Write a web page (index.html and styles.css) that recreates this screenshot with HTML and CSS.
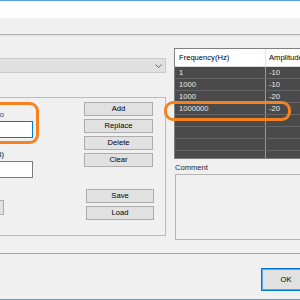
FILE: index.html
```
<!DOCTYPE html>
<html>
<head>
<meta charset="utf-8">
<link rel="stylesheet" href="styles.css">
</head>
<body>
<div class="window">
  <div class="titlebar"></div>
  <div class="toolbar"></div>
  <div class="main">
    <div class="left">
      <div class="combo">
        <svg class="chev" width="7" height="4" viewBox="0 0 7 4"><path d="M0.5 0.5 L3.5 3.5 L6.5 0.5" fill="none" stroke="#606060" stroke-width="1"/></svg>
      </div>
      <div class="group">
        <div class="form">
          <div class="label label-first">Frequency Info</div>
          <div class="input focus"></div>
          <div class="label label-second">Amplitude(dB)</div>
          <div class="input"></div>
          <div class="btn side-btn"></div>
        </div>
        <div class="buttons">
          <div class="btn">Add</div>
          <div class="btn">Replace</div>
          <div class="btn">Delete</div>
          <div class="btn">Clear</div>
          <div class="btn file-btn save">Save</div>
          <div class="btn file-btn">Load</div>
        </div>
      </div>
    </div>
    <div class="right">
      <div class="table">
        <div class="row head"><div class="cell c1">Frequency(Hz)</div><div class="cell c2">Amplitude(dB)</div></div>
        <div class="row"><div class="cell c1">1</div><div class="cell c2">-10</div></div>
        <div class="row"><div class="cell c1">1000</div><div class="cell c2">-10</div></div>
        <div class="row"><div class="cell c1">1000</div><div class="cell c2">-20</div></div>
        <div class="row"><div class="cell c1">1000000</div><div class="cell c2">-20</div></div>
        <div class="row"><div class="cell c1"></div><div class="cell c2"></div></div>
        <div class="row"><div class="cell c1"></div><div class="cell c2"></div></div>
        <div class="row"><div class="cell c1"></div><div class="cell c2"></div></div>
        <div class="row"><div class="cell c1"></div><div class="cell c2"></div></div>
      </div>
      <div class="comment-label">Comment</div>
      <div class="comment"></div>
    </div>
  </div>
  <div class="sep"></div>
  <div class="footer">
    <div class="ok">OK</div>
  </div>
</div>
<div class="mark mark-row"></div>
<div class="mark mark-input"></div>
</body>
</html>
```
FILE: styles.css
```
* { box-sizing: border-box; }
html, body { margin: 0; }
body {
  width: 300px;
  height: 300px;
  overflow: hidden;
  position: relative;
  background: #f0f0f0;
  font-family: "Liberation Sans", Arial, sans-serif;
  font-size: 7.6px;
  color: #000;
}
.window {
  height: 300px;
  border-top: 1px solid #54a2e4;
  border-bottom: 1px solid #54a2e4;
  display: flex;
  flex-direction: column;
}
.titlebar { height: 17px; flex: none; background: #fff; }
.toolbar {
  height: 17px;
  flex: none;
  border-bottom: 1px solid #b4b4b4;
  box-shadow: 0 1px 0 #e0e0e0;
  margin-bottom: 1px;
}
.main {
  display: flex;
  height: 217px;
  flex: none;
  margin-left: -100px;
}
.left { width: 266px; flex: none; padding-top: 22px; }
.combo {
  height: 15px;
  border: 1px solid #cacaca;
  background: #e0e0e0;
  display: flex;
  align-items: center;
  justify-content: flex-end;
  padding-right: 3px;
}
.chev { display: block; }
.group {
  margin-top: 24px;
  height: 139px;
  border: 1px solid #bcbcbc;
  display: flex;
}
.form {
  width: 132px;
  flex: none;
  display: flex;
  flex-direction: column;
  align-items: flex-end;
  padding-top: 11px;
}
.label {
  line-height: 11px;
  height: 11px;
  margin-right: 29px;
  white-space: nowrap;
}
.label-first { color: #1c4f94; margin-bottom: 1px; }
.label-second { margin-top: 11px; margin-bottom: 1px; }
.input {
  width: 90px;
  height: 17px;
  background: #fff;
  border: 1px solid #7a7a7a;
}
.input.focus { border-color: #0078d7; }
.btn {
  height: 14px;
  border: 1px solid #adadad;
  background: #e1e1e1;
  display: flex;
  align-items: center;
  justify-content: center;
  line-height: 1;
  white-space: nowrap;
}
.side-btn {
  width: 60px;
  height: 15px;
  margin-top: 22px;
  margin-right: 29px;
}
.buttons {
  margin-left: 51px;
  width: 69px;
  flex: none;
  padding-top: 4px;
  display: flex;
  flex-direction: column;
  gap: 3px;
}
.file-btn { margin-left: 2px; width: 68px; }
.save { margin-top: 19px; }
.right {
  margin-left: 8px;
  width: 170px;
  flex: none;
  padding-top: 12px;
}
.table {
  height: 111px;
  border: 1px solid #7f7f7f;
  background: #4a4a4a;
  overflow: hidden;
}
.row {
  display: grid;
  grid-template-columns: 91px 1fr;
  height: 12px;
  border-bottom: 1px solid #666;
  color: #ededed;
}
.cell {
  line-height: 11px;
  white-space: nowrap;
  overflow: hidden;
}
.c1 { padding-left: 4px; border-right: 1px solid #9a9a9a; }
.c2 { padding-left: 3px; }
.row.head {
  height: 18px;
  background: #fff;
  color: #000;
  border-bottom: 1px solid #d8d8d8;
}
.row.head .cell { line-height: 17px; }
.row.head .c1 { border-right-color: #e3e3e3; }
.comment-label {
  margin-top: 3px;
  line-height: 12px;
  padding-left: 1px;
  color: #1e1e1e;
}
.comment {
  margin-left: 1px;
  height: 66px;
  border: 1px solid #b4b4b4;
  background: #f0f0f0;
}
.sep { height: 1px; flex: none; background: #a5a5a5; }
.footer {
  flex: 1;
  display: flex;
  padding-left: 261px;
  padding-top: 14px;
}
.ok {
  width: 50px;
  height: 23px;
  flex: none;
  border: 1px solid #0078d7;
  box-shadow: inset 0 0 0 1px #5fa6e6;
  background: #e1e1e1;
  display: flex;
  align-items: center;
  justify-content: center;
}
.mark {
  position: absolute;
  border: 3px solid #f5821f;
  border-radius: 9px;
}
.mark-row { left: 164px; top: 101px; width: 127px; height: 20px; }
.mark-input { left: -20px; top: 102px; width: 59px; height: 42px; }
```
